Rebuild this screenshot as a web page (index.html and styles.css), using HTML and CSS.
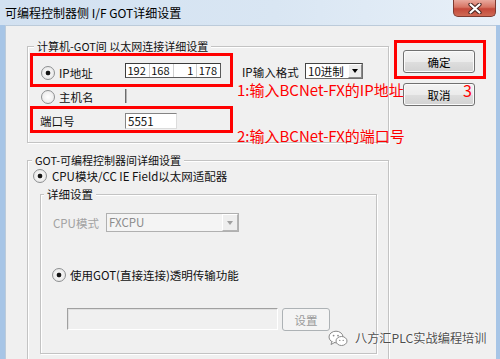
FILE: index.html
```html
<!DOCTYPE html>
<html lang="zh-CN">
<head>
    <meta charset="UTF-8">
    <meta name="viewport" content="width=device-width, initial-scale=1.0">
    <title>可编程控制器侧 I/F GOT详细设置</title>
    <link rel="stylesheet" href="styles.css">
</head>
<body>

<div class="window">
    <div class="titlebar">
        <span class="title">可编程控制器侧 I/F GOT详细设置</span>
        <span class="close-btn">
            <svg width="14" height="11" viewBox="0 0 14 11">
                <path d="M2.5 1.5 L11.5 9.5 M11.5 1.5 L2.5 9.5" stroke="#4a2622" stroke-width="4.2" stroke-linecap="round"/>
                <path d="M2.5 1.5 L11.5 9.5 M11.5 1.5 L2.5 9.5" stroke="#fff" stroke-width="2.2" stroke-linecap="round"/>
            </svg>
        </span>
    </div>

    <div class="frame">
        <div class="client">
            <div class="main-col">
                <fieldset class="group">
                    <legend>计算机-GOT间 以太网连接详细设置</legend>
                    <div class="eth-body">
                        <label class="radio checked">IP地址</label>
                        <div class="ip-row">
                            <div class="ip-box">
                                <span>192</span><span>168</span><span>1</span><span>178</span>
                            </div>
                            <span class="ip-fmt-label">IP输入格式</span>
                            <div class="combo">
                                <span class="combo-text">10进制</span>
                                <span class="combo-btn"></span>
                            </div>
                        </div>

                        <label class="radio">主机名</label>
                        <div class="host-stub"></div>

                        <span class="plain-label">端口号</span>
                        <div class="textbox port">5551</div>
                    </div>
                </fieldset>

                <fieldset class="group group-plc">
                    <legend>GOT-可编程控制器间详细设置</legend>
                    <div class="plc-body">
                        <label class="radio checked cpu-radio">CPU模块/CC IE Field以太网适配器</label>

                        <fieldset class="group group-detail">
                            <legend>详细设置</legend>
                            <div class="detail-body">
                                <div class="cpu-row">
                                    <span class="disabled-label">CPU模式</span>
                                    <div class="combo disabled">
                                        <span class="combo-text">FXCPU</span>
                                        <span class="combo-btn"></span>
                                    </div>
                                </div>
                                <label class="radio checked pass-radio">使用GOT(直接连接)透明传输功能</label>
                                <div class="setting-row">
                                    <div class="textbox disabled wide"></div>
                                    <button class="btn disabled">设置</button>
                                </div>
                            </div>
                        </fieldset>
                    </div>
                </fieldset>
            </div>

            <div class="side-col">
                <button class="btn">确定</button>
                <button class="btn">取消</button>
            </div>
        </div>
    </div>

    <!-- red annotations drawn over the dialog -->
    <div class="mark mark-ip"></div>
    <div class="mark mark-port"></div>
    <div class="mark mark-ok"></div>
    <div class="note note-ip">1:输入BCNet-FX的IP地址</div>
    <div class="note note-port">2:输入BCNet-FX的端口号</div>
    <div class="note note-3">3</div>

    <div class="watermark">
        <svg width="20" height="17" viewBox="0 0 20 17">
            <ellipse cx="8" cy="7" rx="7" ry="5.8" fill="#fff" stroke="#8a8a8a" stroke-width="1"/>
            <path d="M4 11.5 L3 14.5 L7 12.3" fill="#fff" stroke="#8a8a8a" stroke-width="1"/>
            <ellipse cx="13.5" cy="11" rx="5.5" ry="4.5" fill="#fff" stroke="#8a8a8a" stroke-width="1"/>
            <circle cx="5.6" cy="5.6" r="0.9" fill="#8a8a8a"/>
            <circle cx="10" cy="5.6" r="0.9" fill="#8a8a8a"/>
            <circle cx="11.8" cy="10.4" r="0.7" fill="#8a8a8a"/>
            <circle cx="15.2" cy="10.4" r="0.7" fill="#8a8a8a"/>
        </svg>
        <span>八方汇PLC实战编程培训</span>
    </div>
</div>

</body>
</html>
```

FILE: styles.css
```css
* {
    box-sizing: border-box;
}
html, body {
    margin: 0;
    padding: 0;
}
body {
    width: 500px;
    height: 359px;
    overflow: hidden;
    font-family: "Noto Sans CJK SC", sans-serif;
    font-size: 11.5px;
    color: #111;
}
.window {
    position: relative;
    width: 500px;
    height: 359px;
    overflow: hidden;
    display: flex;
    flex-direction: column;
    background-color: #f0f0f0;
}
.titlebar {
    flex: none;
    height: 25px;
    display: flex;
    align-items: flex-start;
    background: linear-gradient(to right, #d2e1f1 0%, #d9e6f3 55%, #e8f0f8 100%);
}
.title {
    padding-left: 5px;
    line-height: 25px;
    font-size: 12px;
    color: #000;
}
.close-btn {
    margin-left: auto;
    margin-right: 4px;
    width: 43px;
    height: 17px;
    display: flex;
    align-items: center;
    justify-content: center;
    border: 1px solid #7e3a30;
    border-top: none;
    border-radius: 0 0 5px 5px;
    background: linear-gradient(#e9a99d 0%, #d77463 45%, #c4493a 55%, #cf6a55 100%);
}
.frame {
    flex: 1;
    display: flex;
    border-left: 5px solid #a7c5e6;
    border-right: 4px solid #a7c5e6;
}
.client {
    flex: 1;
    display: flex;
    border-top: 1px solid #bccbda;
    border-left: 1px solid #bccbda;
    background-color: #f0f0f0;
}
.main-col {
    width: 362px;
    margin-left: 21px;
    padding-top: 13px;
}
.side-col {
    margin-left: 14px;
    padding-top: 24px;
    display: flex;
    flex-direction: column;
    gap: 10px;
}

/* group boxes */
.group {
    margin: 0;
    padding: 0;
    min-width: 0;
    border: 1px solid #c3c3c3;
    box-shadow: inset 1px 1px 0 #fff, 1px 1px 0 #fff;
}
.group > legend {
    margin-left: 6px;
    padding: 0 3px;
    line-height: 14px;
    font-size: 11px;
    background-color: #f0f0f0;
}
.group-plc {
    margin-top: 10px;
}
.group-plc > legend {
    margin-left: 4px;
}
.group-detail {
    margin: 4px 0 0 12px;
    width: 337px;
}
.group-detail > legend {
    margin-left: 3px;
    font-size: 11.5px;
}

/* radios */
.radio {
    display: flex;
    align-items: center;
    height: 14px;
    line-height: 14px;
    white-space: nowrap;
}
.radio::before {
    content: "";
    flex: none;
    width: 12px;
    height: 12px;
    margin-right: 4px;
    border: 1px solid #8d8f91;
    border-radius: 50%;
    background: radial-gradient(circle, #ffffff 0%, #e4e4e4 100%);
}
.radio.checked::before {
    background: radial-gradient(circle, #151515 0, #151515 2px, #f4f4f4 2.7px, #e2e2e2 100%);
}

/* ethernet group */
.eth-body {
    padding: 8px 0 9px 12px;
    display: grid;
    grid-template-columns: 85px auto;
    grid-auto-rows: 24px;
    align-items: center;
}
.eth-body .radio {
    margin-left: 1px;
}
.ip-row {
    align-self: start;
    padding-top: 2px;
    display: flex;
    align-items: flex-start;
}
.ip-box {
    width: 96px;
    height: 15px;
    display: flex;
    background-color: #fff;
    border: 1px solid #5a5a5a;
    border-top-color: #3c3c3c;
    border-left-color: #3c3c3c;
}
.ip-box span {
    flex: 1;
    text-align: right;
    padding-right: 3px;
    line-height: 13px;
    font-size: 11px;
}
.ip-box span + span {
    border-left: 1px solid #cfcfcf;
}
.ip-fmt-label {
    width: 63px;
    margin-left: 21px;
    margin-top: 1px;
    line-height: 16px;
    white-space: nowrap;
}
.combo {
    width: 58px;
    height: 16px;
    display: flex;
    background-color: #fff;
    border: 1px solid #6e6e6e;
    border-top-color: #454545;
    border-left-color: #454545;
}
.combo-text {
    padding-left: 2px;
    line-height: 14px;
    white-space: nowrap;
}
.combo-btn {
    margin-left: auto;
    width: 14px;
    height: 14px;
    display: flex;
    align-items: center;
    justify-content: center;
    background-color: #ececec;
    border: 1px solid;
    border-color: #fff #8a8a8a #8a8a8a #fff;
}
.combo-btn::after {
    content: "";
    border-left: 3px solid transparent;
    border-right: 3px solid transparent;
    border-top: 4px solid #000;
}
.host-stub {
    align-self: start;
    margin-top: 4px;
    width: 2px;
    height: 14px;
    background-color: #b4b4b4;
    border-left: 1px solid #6c6c6c;
}
.plain-label {
    line-height: 16px;
}
.textbox {
    background-color: #fff;
    border: 1px solid;
    border-color: #848484 #dcdcdc #dcdcdc #848484;
}
.port {
    width: 52px;
    height: 16px;
    padding-left: 2px;
    line-height: 14px;
}

/* plc group */
.plc-body {
    padding: 2px 0 20px 0;
}
.cpu-radio {
    margin-left: 5px;
}
.cpu-radio::before {
    margin-right: 5px;
}
.detail-body {
    padding: 12px 0 22px 12px;
}
.cpu-row {
    height: 19px;
    display: flex;
    align-items: center;
}
.disabled-label {
    width: 53px;
    color: #a2a2a2;
    white-space: nowrap;
}
.combo.disabled {
    width: 133px;
    height: 19px;
    background-color: #f4f4f4;
    border-color: #b0b0b0;
}
.combo.disabled .combo-text {
    color: #8c8c8c;
    line-height: 17px;
}
.combo.disabled .combo-btn {
    width: 16px;
    height: 17px;
    background-color: #eeeeee;
    border-color: #fff #b4b4b4 #b4b4b4 #fff;
}
.combo.disabled .combo-btn::after {
    border-top-color: #a0a0a0;
}
.pass-radio {
    margin-top: 36px;
    margin-left: -1px;
}
.setting-row {
    margin-top: 26px;
    margin-left: 14px;
    display: flex;
    align-items: flex-start;
    gap: 4px;
}
.textbox.disabled {
    background-color: #f0f0f0;
    border-color: #a0a0a0 #ffffff #ffffff #a0a0a0;
    box-shadow: inset 1px 1px 0 #e0e0e0;
}
.wide {
    width: 211px;
    height: 22px;
}

/* buttons */
.btn {
    width: 72px;
    height: 23px;
    padding: 0;
    font-family: "Noto Sans CJK SC", sans-serif;
    font-size: 11.5px;
    color: #000;
    border: 1px solid #707070;
    border-radius: 3px;
    background: linear-gradient(#f3f3f3 0%, #ebebeb 50%, #dedede 51%, #d2d2d2 100%);
    box-shadow: inset 0 0 0 1px #fbfbfb;
}
.btn.disabled {
    width: 48px;
    color: #9a9a9a;
    border-color: #adb2b5;
    background: #f4f4f4;
    box-shadow: none;
}

/* annotations */
.mark {
    position: absolute;
    border: 3px solid #ff0000;
}
.mark-ip {
    left: 30px;
    top: 53px;
    width: 203px;
    height: 34px;
}
.mark-port {
    left: 30px;
    top: 106px;
    width: 203px;
    height: 27px;
}
.mark-ok {
    left: 394px;
    top: 40px;
    width: 92px;
    height: 39px;
}
.note {
    position: absolute;
    color: #ff0000;
    font-size: 15px;
    line-height: 16px;
    white-space: nowrap;
}
.note-ip {
    left: 237px;
    top: 82px;
}
.note-port {
    left: 237px;
    top: 128px;
}
.note-3 {
    left: 463px;
    top: 82px;
    font-size: 16px;
}
.watermark {
    position: absolute;
    left: 328px;
    top: 329px;
    display: flex;
    align-items: center;
    gap: 7px;
    font-size: 12.2px;
    color: #4e4e4e;
    text-shadow: 0 0 2px #fff, 0 0 1px #fff;
}
```
